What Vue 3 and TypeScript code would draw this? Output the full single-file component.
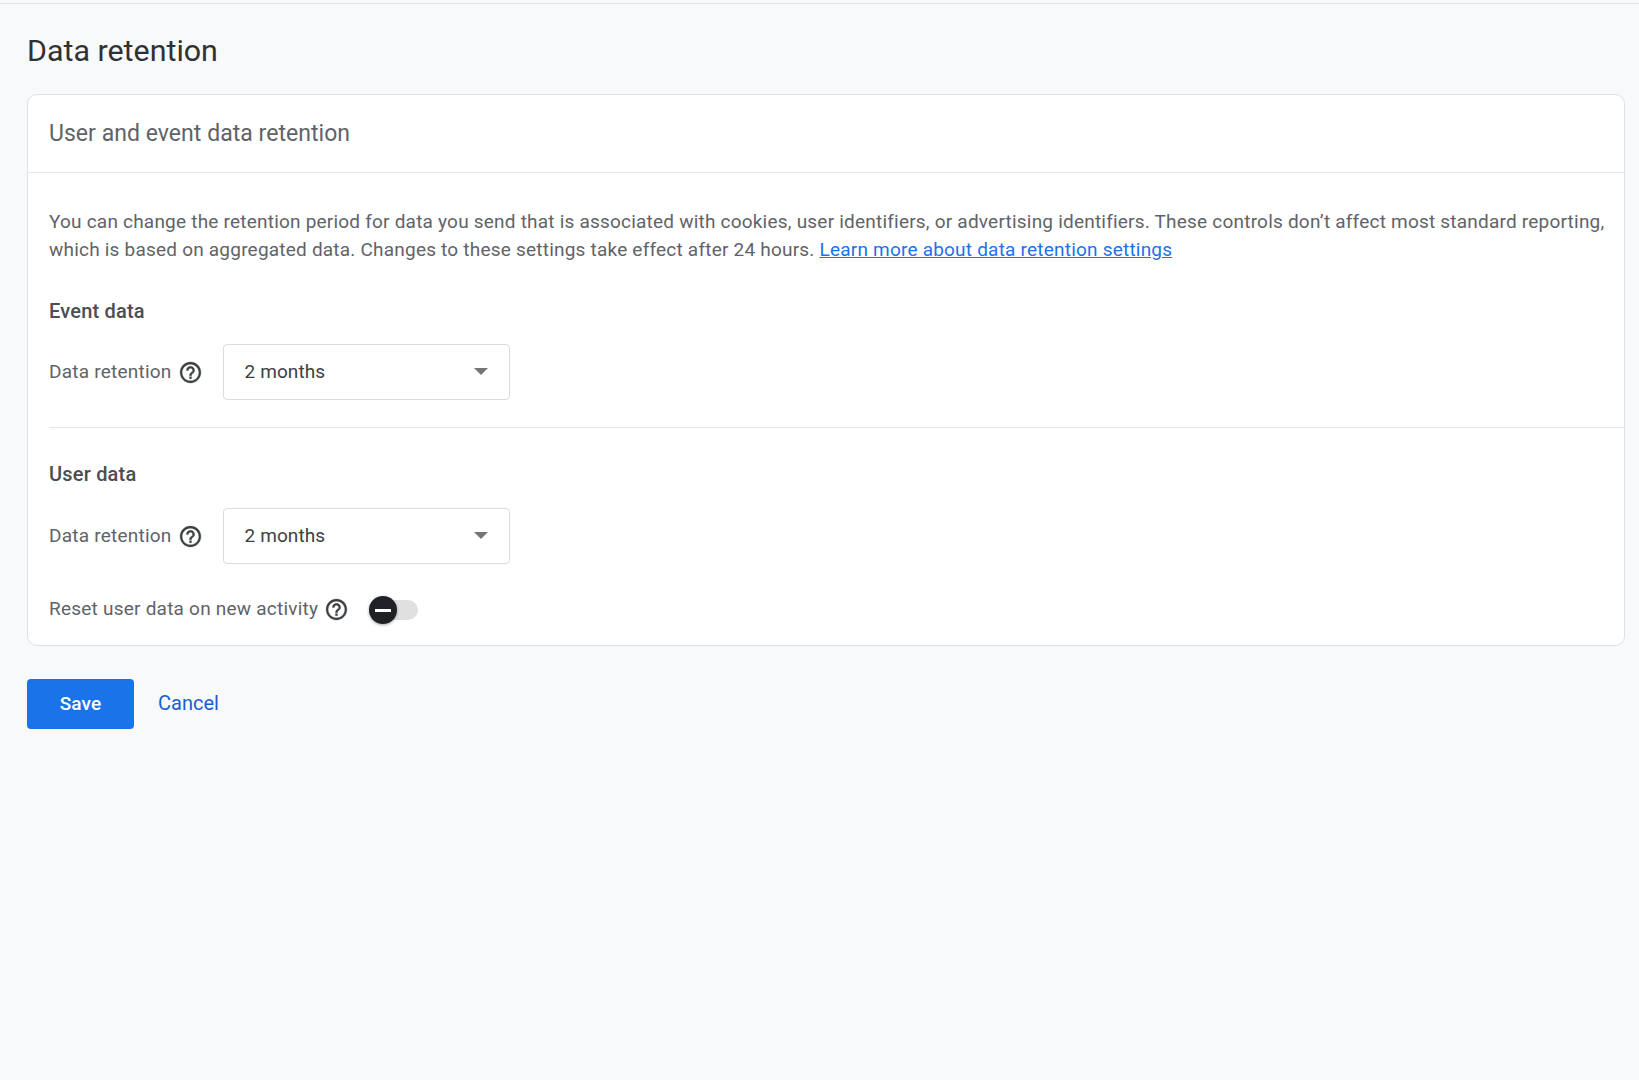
<script setup lang="ts">
const helpPath = 'M11 18h2v-2h-2v2zm1-16C6.48 2 2 6.48 2 12s4.48 10 10 10 10-4.48 10-10S17.52 2 12 2zm0 18c-4.41 0-8-3.59-8-8s3.59-8 8-8 8 3.59 8 8-3.59 8-8 8zm0-14c-2.21 0-4 1.79-4 4h2c0-1.1.9-2 2-2s2 .9 2 2c0 2-3 1.75-3 5h2c0-2.25 3-2.5 3-5 0-2.21-1.79-4-4-4z'
</script>

<template>
  <div class="page">
    <h1 class="title">Data retention</h1>
    <section class="card">
      <header class="card-head">User and event data retention</header>
      <div class="card-body">
        <p class="intro">
          You can change the retention period for data you send that is associated with cookies, user identifiers, or advertising identifiers. These controls don’t affect most standard reporting, which is based on aggregated data. Changes to these settings take effect after 24 hours.
          <a class="link" href="#">Learn more about data retention settings</a>
        </p>

        <h2 class="sub first">Event data</h2>
        <div class="row">
          <span class="label">Data retention</span>
          <svg class="help" viewBox="0 0 24 24"><path :d="helpPath" /></svg>
          <div class="select">
            <span>2 months</span>
            <i class="caret"></i>
          </div>
        </div>

        <div class="rule"></div>

        <h2 class="sub second">User data</h2>
        <div class="row">
          <span class="label">Data retention</span>
          <svg class="help" viewBox="0 0 24 24"><path :d="helpPath" /></svg>
          <div class="select">
            <span>2 months</span>
            <i class="caret"></i>
          </div>
        </div>

        <div class="row reset">
          <span class="label">Reset user data on new activity</span>
          <svg class="help" viewBox="0 0 24 24"><path :d="helpPath" /></svg>
          <div class="toggle">
            <span class="track"></span>
            <span class="knob"><i></i></span>
          </div>
        </div>
      </div>
    </section>

    <div class="actions">
      <button class="save" type="button">Save</button>
      <a class="cancel" href="#">Cancel</a>
    </div>
  </div>
</template>

<style>
html, body { margin: 0; background: #f8f9fa; }
</style>

<style scoped>
.page {
  box-sizing: border-box;
  min-height: 1076px;
  margin-top: 3px;
  border-top: 1px solid #dfe1e5;
  padding: 0 14px 0 27px;
  background: #f8f9fa;
  font-family: Roboto, "Liberation Sans", sans-serif;
  color: #5f6368;
}
.title {
  margin: 0;
  padding: 28px 0 24px;
  font-size: 30.4px;
  line-height: 38px;
  font-weight: 400;
  color: #303134;
}
.card {
  box-sizing: border-box;
  height: 552px;
  background: #fff;
  border: 1px solid #dfe1e5;
  border-radius: 10px;
}
.card-head {
  box-sizing: border-box;
  height: 78px;
  padding: 0 21px;
  display: flex;
  align-items: center;
  border-bottom: 1px solid #e3e5e8;
  font-size: 23px;
  letter-spacing: .04px;
  font-weight: 400;
  color: #5f6368;
}
.card-body { padding: 35px 0 0 21px; }
.intro {
  margin: 0;
  padding-right: 14px;
  font-size: 19px;
  letter-spacing: .213px;
  line-height: 28px;
  color: #5f6368;
}
.link { color: #1a73e8; }
.sub {
  margin: 0;
  font-size: 20px;
  letter-spacing: .2px;
  line-height: 24px;
  font-weight: 500;
  color: #4a4d51;
}
.first { margin-top: 35px; }
.second { margin-top: 34px; }
.row { display: flex; align-items: center; }
.first + .row { margin-top: 21px; }
.second + .row { margin-top: 22px; }
.label { font-size: 19px; letter-spacing: .23px; color: #5f6368; margin-top: -2px; }
.help { width: 25px; height: 25px; margin-left: 6px; fill: #3c4043; stroke: #3c4043; stroke-width: .3; flex: none; }
.select {
  box-sizing: border-box;
  width: 287px;
  height: 56px;
  margin-left: 20px;
  padding: 0 21px 2px;
  display: flex;
  align-items: center;
  justify-content: space-between;
  background: #fff;
  border: 1px solid #dadce0;
  border-radius: 4px;
  font-size: 19px;
  letter-spacing: .1px;
  color: #3c4043;
}
.caret {
  width: 0;
  height: 0;
  border-left: 7px solid transparent;
  border-right: 7px solid transparent;
  border-top: 7px solid #757575;
}
.rule { height: 1px; background: #e3e5e8; margin-top: 27px; }
.reset { margin-top: 31px; }
.toggle { position: relative; width: 49px; height: 28px; margin: 1px 0 -1px 20px; }
.track {
  position: absolute;
  left: 8px;
  right: 0;
  top: 4px;
  height: 20px;
  border-radius: 10px;
  background: #e0e0e0;
}
.knob {
  position: absolute;
  left: 0;
  top: 0;
  width: 28px;
  height: 28px;
  border-radius: 50%;
  background: #202124;
  box-shadow: 0 1px 3px rgba(0, 0, 0, .35);
  display: flex;
  align-items: center;
  justify-content: center;
}
.knob i { width: 16px; height: 3px; background: #fff; }
.actions { display: flex; align-items: center; margin-top: 33px; }
.save {
  width: 107px;
  height: 50px;
  border: 0;
  border-radius: 4px;
  padding: 0 0 2px;
  background: #1a73e8;
  color: #fff;
  font-family: inherit;
  font-size: 19px;
  letter-spacing: .1px;
  font-weight: 500;
}
.cancel {
  margin: 0 0 2px 24px;
  font-size: 20px;
  color: #1a5fd0;
  text-decoration: none;
}
</style>
